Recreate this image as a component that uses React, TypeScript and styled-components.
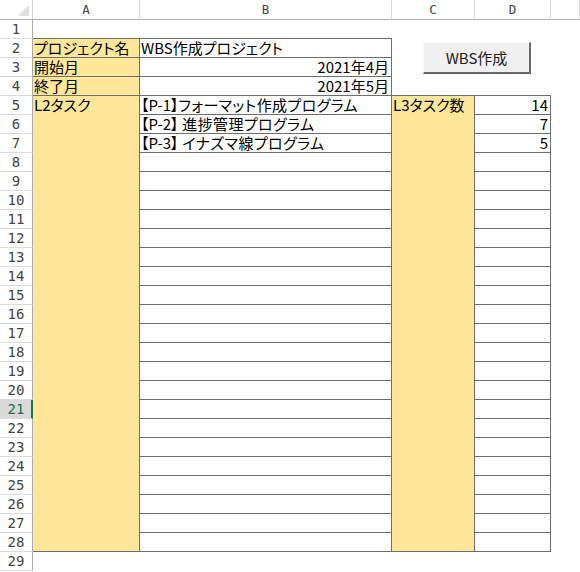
import React from "react";
import styled, { createGlobalStyle, css } from "styled-components";

const Global = createGlobalStyle`
  html, body { margin: 0; padding: 0; background: #ffffff; }
  body { font-family: "Noto Sans CJK JP", "Noto Sans", sans-serif; }
`;

const BORDER = "#6e6e6e";
const YELLOW = "#ffe699";

const Sheet = styled.div`
  position: relative;
  display: grid;
  grid-template-columns: 33px 107px 252px 83px 76px 1fr;
  grid-template-rows: 20px repeat(29, 19px);
  width: 580px;
  height: 572px;
  overflow: hidden;
  background: #ffffff;
`;

const Corner = styled.div`
  grid-row: 1;
  grid-column: 1;
  position: relative;
  background: #ffffff;
  border-right: 1px solid #d4d4d4;
  border-bottom: 1px solid #ababab;
  box-sizing: border-box;
  &::after {
    content: "";
    position: absolute;
    right: 3px;
    bottom: 3px;
    width: 0;
    height: 0;
    border-left: 11px solid transparent;
    border-bottom: 11px solid #dfdfdf;
  }
`;

const ColHeader = styled.div<{ $col: number }>`
  grid-row: 1;
  grid-column: ${(p) => p.$col};
  box-sizing: border-box;
  border-right: 1px solid #dadada;
  border-bottom: 1px solid #ababab;
  display: flex;
  align-items: center;
  justify-content: center;
  font-family: "DejaVu Sans Mono", monospace;
  font-size: 12.5px;
  color: #444444;
  line-height: 18px;
  padding-top: 1px;
`;

const RowHeader = styled.div<{ $row: number; $active?: boolean }>`
  grid-row: ${(p) => p.$row};
  grid-column: 1;
  box-sizing: border-box;
  border-bottom: 1px solid #dcdcdc;
  border-right: 1px solid #ababab;
  display: flex;
  align-items: center;
  justify-content: center;
  font-family: "DejaVu Sans Mono", monospace;
  font-size: 14px;
  color: #444444;
  line-height: 18px;
  ${(p) =>
    p.$active &&
    css`
      background: #d9d9d9;
      color: #217346;
      border-right: 2px solid #217346;
      padding-left: 1px;
    `}
`;

const Cell = styled.div<{
  $row: number;
  $col: number;
  $span?: number;
  $fill?: boolean;
  $align?: "left" | "right";
  $top?: boolean;
  $noLeft?: boolean;
}>`
  grid-row: ${(p) => p.$row} / span ${(p) => p.$span ?? 1};
  grid-column: ${(p) => p.$col};
  box-sizing: border-box;
  margin-top: -1px;
  margin-left: ${(p) => (p.$noLeft ? "0" : "-1px")};
  border: 1px solid ${BORDER};
  ${(p) => p.$noLeft && "border-left: none;"}
  background: ${(p) => (p.$fill ? YELLOW : "#ffffff")};
  display: flex;
  align-items: ${(p) => (p.$top ? "flex-start" : "flex-end")};
  justify-content: ${(p) => (p.$align === "right" ? "flex-end" : "flex-start")};
  padding: 0 2px 0 1px;
  font-family: "Noto Sans CJK JP", sans-serif;
  font-feature-settings: "palt";
  font-size: 15px;
  line-height: 18px;
  color: #000000;
  white-space: pre;
  overflow: hidden;
`;

const TaskName = styled.span`
  letter-spacing: 0.4px;
`;

const MacroButton = styled.div`
  position: absolute;
  left: 423px;
  top: 42px;
  width: 108px;
  height: 32px;
  box-sizing: border-box;
  background: #f0f0f0;
  border-top: 1px solid #f8f8f8;
  border-left: 1px solid #f8f8f8;
  border-right: 2px solid #6a6a6a;
  border-bottom: 2px solid #6a6a6a;
  display: flex;
  align-items: center;
  justify-content: center;
  font-family: "Noto Sans CJK JP", sans-serif;
  font-size: 15px;
  color: #222222;
`;

const columns = ["A", "B", "C", "D", ""];

const tasks = [
  { code: "【P-1】", name: "フォーマット作成プログラム" },
  { code: "【P-2】", name: " 進捗管理プログラム" },
  { code: "【P-3】", name: " イナズマ線プログラム" },
];
const counts = ["14", "7", "5"];

export default function App() {
  const rows = Array.from({ length: 29 }, (_, i) => i + 1);
  const taskRows = Array.from({ length: 24 }, (_, i) => i + 5);

  return (
    <>
      <Global />
      <Sheet>
        <Corner />
        {columns.map((c, i) => (
          <ColHeader key={i} $col={i + 2}>
            {c}
          </ColHeader>
        ))}
        {rows.map((r) => (
          <RowHeader key={r} $row={r + 1} $active={r === 21}>
            {r}
          </RowHeader>
        ))}

        <Cell $row={3} $col={2} $fill $noLeft>
          プロジェクト名
        </Cell>
        <Cell $row={3} $col={3}>
          WBS作成プロジェクト
        </Cell>
        <Cell $row={4} $col={2} $fill $noLeft>
          開始月
        </Cell>
        <Cell $row={4} $col={3} $align="right">
          2021年4月
        </Cell>
        <Cell $row={5} $col={2} $fill $noLeft>
          終了月
        </Cell>
        <Cell $row={5} $col={3} $align="right">
          2021年5月
        </Cell>

        <Cell $row={6} $col={2} $span={24} $fill $top $noLeft>
          L2タスク
        </Cell>
        <Cell $row={6} $col={4} $span={24} $fill $top>
          L3タスク数
        </Cell>
        {taskRows.map((r, i) => {
          const t = tasks[i];
          return (
            <React.Fragment key={r}>
              <Cell $row={r + 1} $col={3}>
                {t && (
                  <>
                    {t.code}
                    <TaskName>{t.name}</TaskName>
                  </>
                )}
              </Cell>
              <Cell $row={r + 1} $col={5} $align="right">
                {counts[i] ?? ""}
              </Cell>
            </React.Fragment>
          );
        })}

        <MacroButton>WBS作成</MacroButton>
      </Sheet>
    </>
  );
}
